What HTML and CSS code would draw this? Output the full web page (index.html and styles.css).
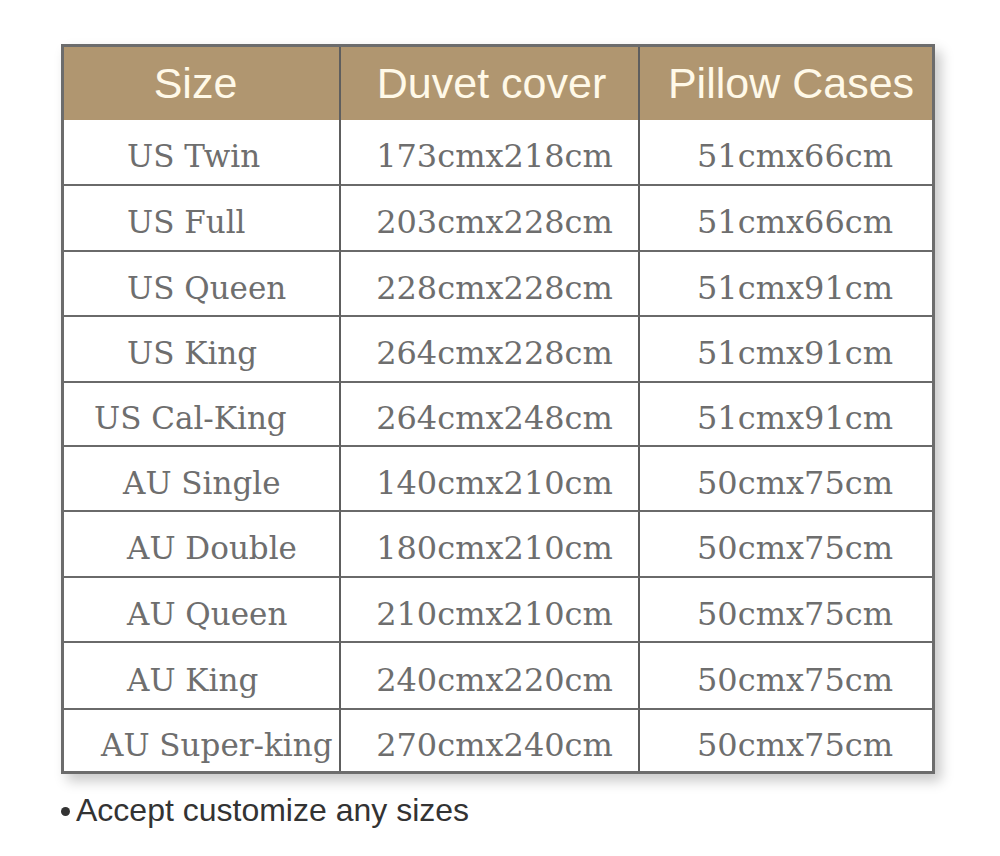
FILE: index.html
```html
<!DOCTYPE html>
<html lang="en">
<head>
<meta charset="utf-8">
<title>Size chart</title>
<link rel="stylesheet" href="styles.css">
</head>
<body>
<main class="page">
  <div class="chart">
    <div class="cell head c1">Size</div>
    <div class="cell head c2">Duvet cover</div>
    <div class="cell head c3">Pillow Cases</div>

    <div class="cell c1">US Twin</div>
    <div class="cell c2">173cmx218cm</div>
    <div class="cell c3">51cmx66cm</div>

    <div class="cell c1">US Full</div>
    <div class="cell c2">203cmx228cm</div>
    <div class="cell c3">51cmx66cm</div>

    <div class="cell c1">US Queen</div>
    <div class="cell c2">228cmx228cm</div>
    <div class="cell c3">51cmx91cm</div>

    <div class="cell c1">US King</div>
    <div class="cell c2">264cmx228cm</div>
    <div class="cell c3">51cmx91cm</div>

    <div class="cell c1 wide">US Cal-King</div>
    <div class="cell c2">264cmx248cm</div>
    <div class="cell c3">51cmx91cm</div>

    <div class="cell c1 mid">AU Single</div>
    <div class="cell c2">140cmx210cm</div>
    <div class="cell c3">50cmx75cm</div>

    <div class="cell c1">AU Double</div>
    <div class="cell c2">180cmx210cm</div>
    <div class="cell c3">50cmx75cm</div>

    <div class="cell c1">AU Queen</div>
    <div class="cell c2">210cmx210cm</div>
    <div class="cell c3">50cmx75cm</div>

    <div class="cell c1">AU King</div>
    <div class="cell c2">240cmx220cm</div>
    <div class="cell c3">50cmx75cm</div>

    <div class="cell c1 widest last">AU Super-king</div>
    <div class="cell c2 last">270cmx240cm</div>
    <div class="cell c3 last">50cmx75cm</div>
  </div>
  <p class="note"><span class="dot"></span>Accept customize any sizes</p>
</main>
</body>
</html>
```

FILE: styles.css
```css
html, body {
  margin: 0;
  padding: 0;
  background: #ffffff;
}

.page {
  padding: 44px 0 0 61px;
}

.chart {
  display: grid;
  width: max-content;
  grid-template-columns: 277px 299px 292px;
  grid-template-rows: 73px 66px 66px 65px 66px 64px 65px 66px 65px 67px 61px;
  border: 3px solid #6c6c6c;
  box-shadow: 6px 7px 12px rgba(0, 0, 0, 0.22);
  background: #ffffff;
}

.cell {
  display: flex;
  align-items: center;
  box-sizing: border-box;
  border-bottom: 2px solid #6a6a6a;
  font-family: "DejaVu Serif", "Liberation Serif", serif;
  font-size: 32px;
  color: #6e6e6e;
  padding-top: 8px;
  white-space: nowrap;
}

.cell.last {
  border-bottom: none;
}

.c1, .c2 {
  border-right: 2px solid #5e5e5e;
}

.c1 {
  font-size: 31px;
  padding-left: 63px;
}

.c1.wide {
  padding-left: 30px;
}

.c1.mid {
  padding-left: 59px;
}

.c1.widest {
  padding-left: 37px;
}

.c2 {
  justify-content: center;
  padding-left: 10px;
}

.c3 {
  justify-content: center;
  padding-left: 18px;
}

.cell.head {
  background: #b09670;
  border-bottom: none;
  font-family: "Liberation Sans", Arial, sans-serif;
  font-size: 43px;
  color: #fff9e8;
  justify-content: center;
  padding: 0;
}

.cell.head.c1 {
  padding-right: 12px;
}

.cell.head.c2 {
  padding-left: 4px;
}

.cell.head.c3 {
  padding-left: 10px;
}

.note {
  margin: 18px 0 0 0;
  display: flex;
  align-items: center;
  font-family: "Liberation Sans", Arial, sans-serif;
  font-size: 32px;
  color: #333333;
}

.dot {
  display: inline-block;
  width: 9px;
  height: 9px;
  border-radius: 50%;
  background: #333333;
  margin: 2px 6px 0 0;
}
```
